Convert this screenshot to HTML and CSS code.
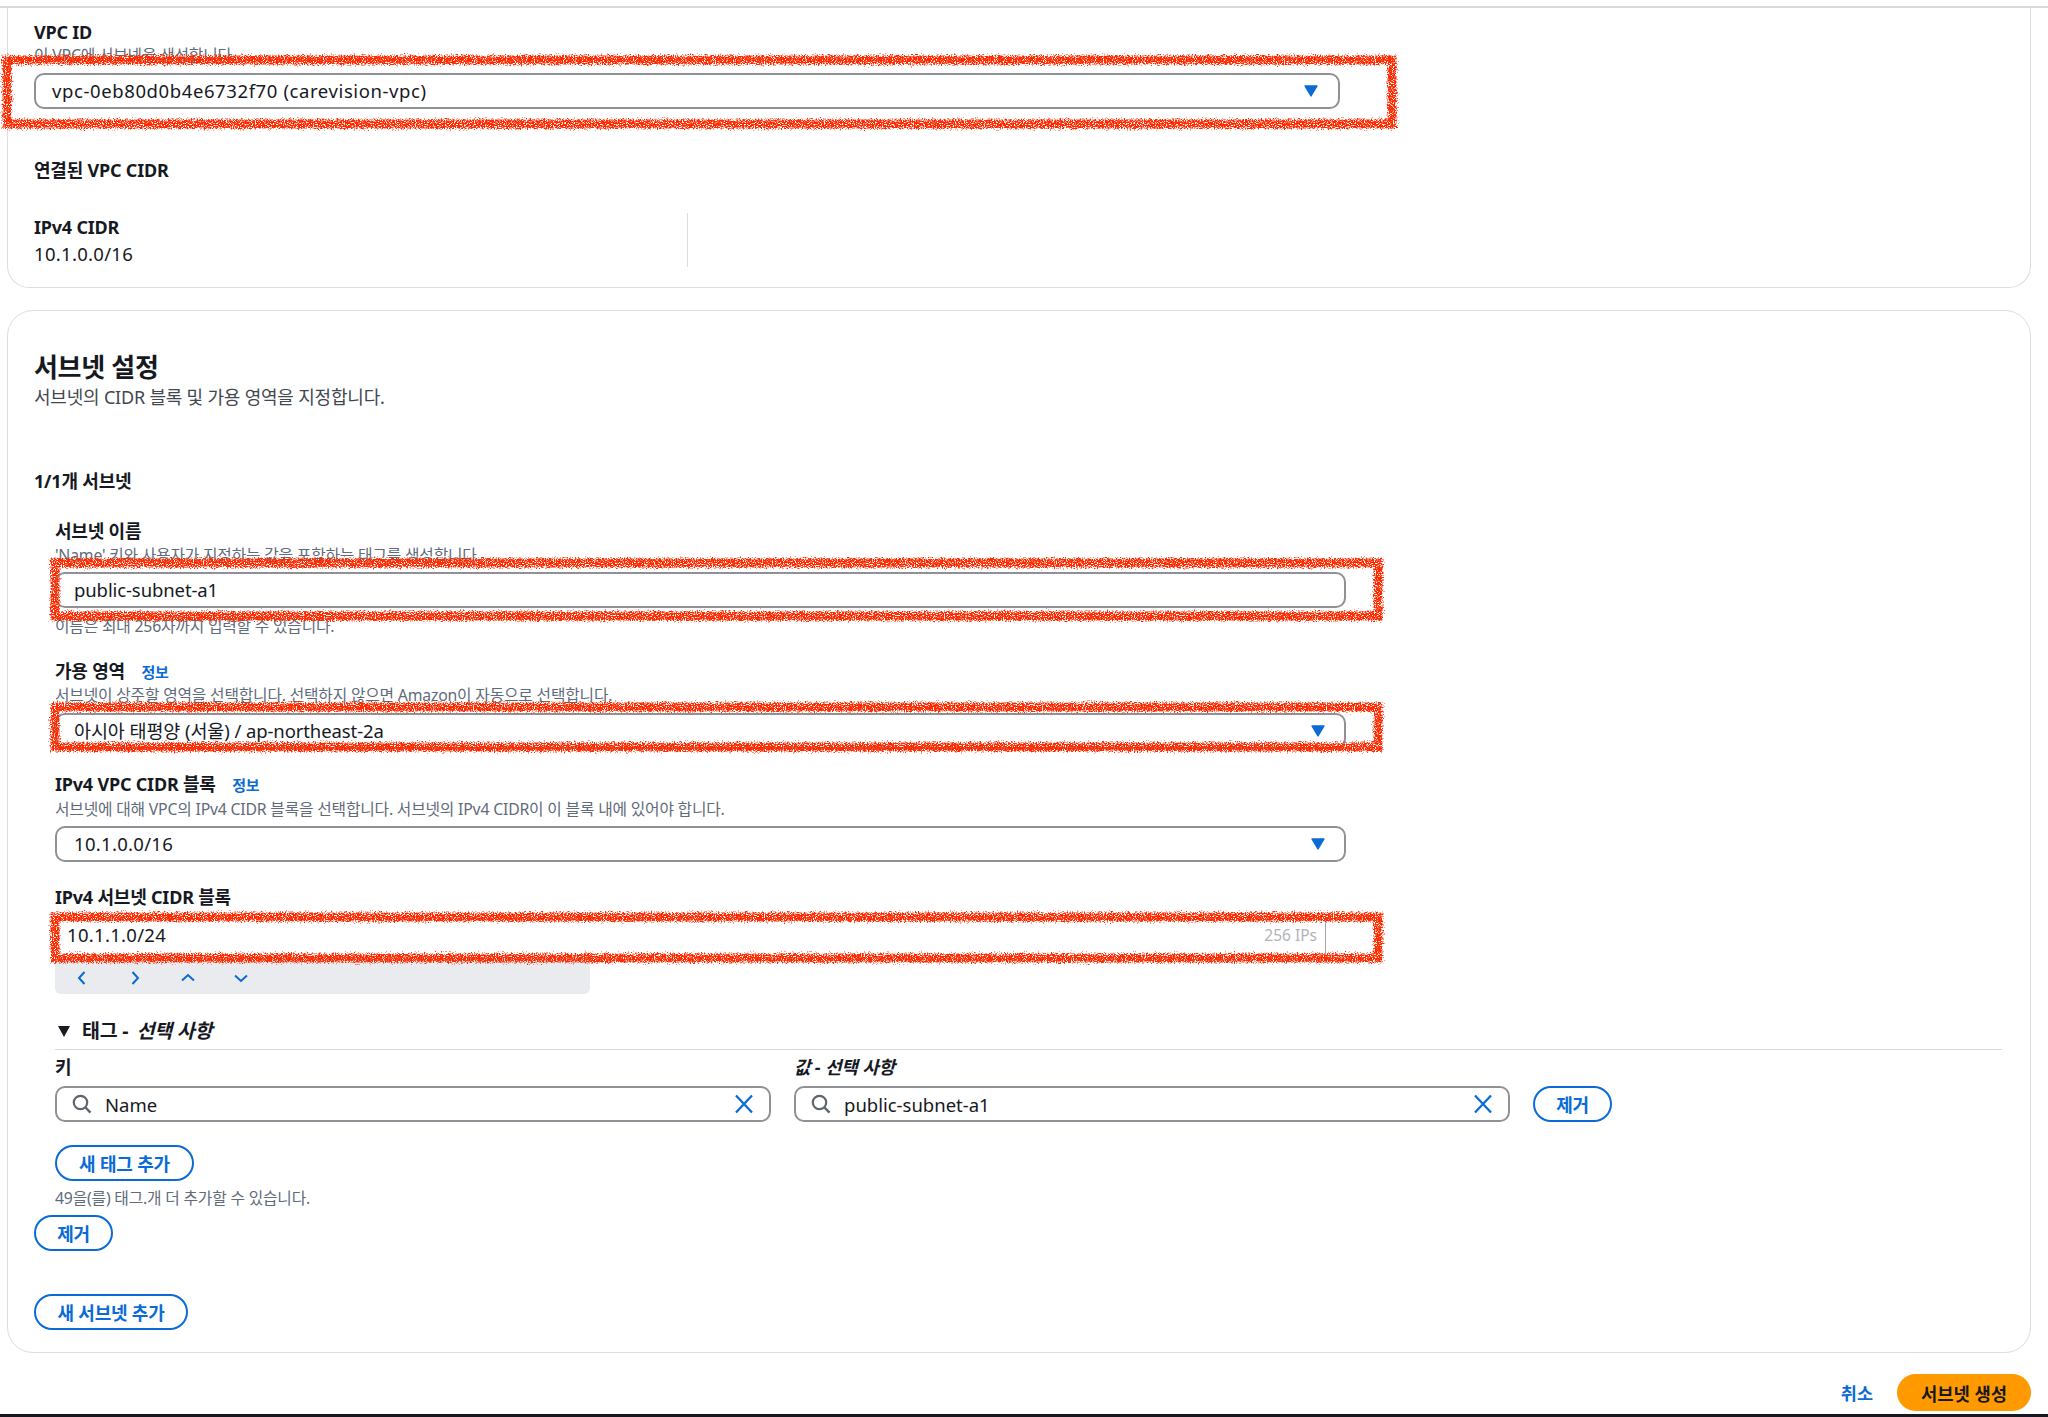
FILE: index.html
```html
<!DOCTYPE html>
<html lang="ko">
<head>
<meta charset="utf-8">
<title>서브넷 생성</title>
<link rel="stylesheet" href="styles.css">
</head>
<body>
<svg class="defs" width="0" height="0" aria-hidden="true">
  <symbol id="i-caret" viewBox="0 0 14 12"><path d="M1 1h12L7 11z" fill="#0a6bd6" stroke="#0a6bd6" stroke-width="1.4" stroke-linejoin="round"/></symbol>
  <symbol id="i-search" viewBox="0 0 20 20"><circle cx="8.5" cy="8.5" r="6.7" fill="none" stroke="#5f6570" stroke-width="2.2"/><path d="M13.5 13.5l5 5.2" fill="none" stroke="#5f6570" stroke-width="2.4"/></symbol>
  <symbol id="i-x" viewBox="0 0 20 20"><path d="M2 1.5l16 17M18 1.5l-16 17" fill="none" stroke="#0a6bd6" stroke-width="2.3"/></symbol>
</svg>
<div class="topline"></div>

<section class="card card-vpc">
  <div class="label">VPC ID</div>
  <div class="desc desc-a">이 VPC에 서브넷을 생성합니다.</div>
  <div class="select select-vpc">
    <span class="vpc-val">vpc-0eb80d0b4e6732f70 (carevision-vpc)</span>
    <svg class="caret"><use href="#i-caret"/></svg>
  </div>
  <div class="label cidr-title">연결된 VPC CIDR</div>
  <div class="cidr-col">
    <div class="label">IPv4 CIDR</div>
    <div class="value num">10.1.0.0/16</div>
  </div>
</section>

<section class="card card-subnet">
  <h2 class="heading">서브넷 설정</h2>
  <p class="subheading">서브넷의 CIDR 블록 및 가용 영역을 지정합니다.</p>
  <div class="label count">1/1개 서브넷</div>

  <div class="subnet">
    <div class="label field-first">서브넷 이름</div>
    <div class="desc desc-b">'Name' 키와 사용자가 지정하는 값을 포함하는 태그를 생성합니다.</div>
    <div class="select select-c"><span>public-subnet-a1</span></div>
    <div class="desc hint">이름은 최대 256자까지 입력할 수 있습니다.</div>

    <div class="label field-next">가용 영역 <a class="info">정보</a></div>
    <div class="desc desc-a">서브넷이 상주할 영역을 선택합니다. 선택하지 않으면 Amazon이 자동으로 선택합니다.</div>
    <div class="select select-a"><span>아시아 태평양 (서울) / ap-northeast-2a</span><svg class="caret"><use href="#i-caret"/></svg></div>

    <div class="label field-next">IPv4 VPC CIDR 블록 <a class="info">정보</a></div>
    <div class="desc desc-b">서브넷에 대해 VPC의 IPv4 CIDR 블록을 선택합니다. 서브넷의 IPv4 CIDR이 이 블록 내에 있어야 합니다.</div>
    <div class="select select-c"><span class="num">10.1.0.0/16</span><svg class="caret"><use href="#i-caret"/></svg></div>

    <div class="label field-next">IPv4 서브넷 CIDR 블록</div>
    <div class="cidr-input">
      <span class="num">10.1.1.0/24</span>
      <span class="ips">256 IPs</span>
    </div>
    <div class="cidr-tools">
      <svg class="chev" viewBox="0 0 16 16"><path d="M10.5 2L5 8l5.5 6"/></svg>
      <svg class="chev" viewBox="0 0 16 16"><path d="M5.5 2L11 8l-5.5 6"/></svg>
      <svg class="chev" viewBox="0 0 16 16"><path d="M2 10.5L8 5l6 5.5"/></svg>
      <svg class="chev" viewBox="0 0 16 16"><path d="M2 5.5L8 11l6-5.5"/></svg>
    </div>

    <div class="tags-head"><span class="tri"></span>태그 - <em>선택 사항</em></div>
    <div class="tag-grid">
      <div class="label">키</div>
      <div class="label"><em>값 - 선택 사항</em></div>
      <div></div>
      <div class="search"><svg class="s-icon"><use href="#i-search"/></svg><span class="s-text">Name</span><svg class="x-icon"><use href="#i-x"/></svg></div>
      <div class="search"><svg class="s-icon"><use href="#i-search"/></svg><span class="s-text">public-subnet-a1</span><svg class="x-icon"><use href="#i-x"/></svg></div>
      <button class="btn btn-remove-tag">제거</button>
    </div>
    <button class="btn btn-add-tag">새 태그 추가</button>
    <div class="desc tag-hint">49을(를) 태그.개 더 추가할 수 있습니다.</div>
  </div>

  <button class="btn btn-remove">제거</button>
  <button class="btn btn-add-subnet">새 서브넷 추가</button>
</section>

<footer class="actions">
  <a class="cancel">취소</a>
  <button class="btn-primary">서브넷 생성</button>
</footer>
<div class="bottombar"></div>

<svg class="marks" viewBox="0 0 2048 1417" aria-hidden="true">
  <defs>
    <filter id="rough" x="-5%" y="-20%" width="110%" height="140%">
      <feTurbulence type="fractalNoise" baseFrequency="0.7" numOctaves="2" seed="4" result="n"/>
      <feDisplacementMap in="SourceGraphic" in2="n" scale="8" xChannelSelector="R" yChannelSelector="G" result="d"/>
      <feTurbulence type="fractalNoise" baseFrequency="0.9" numOctaves="1" seed="11"/>
      <feColorMatrix type="matrix" values="0 0 0 0 0  0 0 0 0 0  0 0 0 0 0  6 0 0 0 -1.9" result="speck"/>
      <feComposite in="d" in2="speck" operator="in"/>
    </filter>
  </defs>
  <g filter="url(#rough)" fill="none" stroke="#ff2a00" stroke-width="9">
    <rect x="7" y="60" width="1385" height="64"/>
    <rect x="55" y="563" width="1323" height="53"/>
    <rect x="55" y="707" width="1323" height="40"/>
    <rect x="55" y="917" width="1323" height="41"/>
  </g>
</svg>
</body>
</html>
```
FILE: styles.css
```css
* { box-sizing: border-box; }
html, body { margin: 0; padding: 0; }
body {
  position: relative;
  height: 1417px;
  overflow: hidden;
  background: #fff;
  color: #16191f;
  font-family: "Noto Sans", "Noto Sans CJK KR", sans-serif;
  font-size: 18.5px;
  display: flex;
  flex-direction: column;
}
.defs { position: absolute; }
.topline { margin-top: 6px; height: 2px; background: #d8d9dc; flex: none; }
.card {
  flex: none;
  margin: 0 17px 0 7px;
  border: 1.5px solid #dcdde0;
  background: #fff;
}
.card-vpc {
  height: 280px;
  border-top: 0;
  border-radius: 0 0 22px 22px;
  padding: 12px 0 0 26px;
}
.card-subnet {
  margin-top: 22px;
  height: 1043px;
  border-radius: 26px;
  padding: 40px 0 0 26px;
}
.label {
  font-family: "Noto Sans", "Noto Sans CJK KR", sans-serif;
  font-weight: 700;
  font-size: 18px;
  line-height: 24px;
  letter-spacing: -0.2px;
}
.desc {
  font-size: 15.8px;
  line-height: 20px;
  color: #5f6b7a;
  letter-spacing: -0.2px;
}
.desc-a { margin-top: 1px; }
.desc-b { margin-top: 2px; }
.select {
  display: flex;
  align-items: center;
  justify-content: space-between;
  height: 36px;
  border: 2.5px solid #909196;
  border-radius: 10px;
  font-size: 18.5px;
  line-height: 24px;
  letter-spacing: -0.1px;
  background: #fff;
}
.select-vpc { margin-top: 8px; width: 1306px; padding: 0 20px 0 16px; }
.select-a { margin-top: 8px; padding: 0 19px 0 17px; }
.select-c { margin-top: 7px; padding: 0 19px 0 17px; }
.vpc-val { letter-spacing: 0.6px; }
.num { letter-spacing: 0.3px; }
.caret { width: 14px; height: 12px; flex: none; }
.cidr-title { margin-top: 49px; }
.cidr-col {
  margin-top: 31px;
  width: 654px;
  height: 54px;
  padding-top: 2px;
  border-right: 1px solid #dcdde0;
}
.value { margin-top: 3px; font-size: 18.5px; line-height: 24px; }
.heading {
  margin: 0;
  font-size: 26px;
  line-height: 32px;
  font-weight: 700;
  letter-spacing: -0.3px;
}
.subheading {
  margin: 2px 0 0;
  font-size: 18px;
  line-height: 24px;
  color: #414750;
  letter-spacing: -0.2px;
}
.count { margin-top: 60px; }
.subnet { margin: 26px 0 0 21px; width: 1291px; }
.hint { margin-top: 8px; }
.field-next { margin-top: 23px; }
.info {
  margin-left: 12px;
  color: #0a6bd6;
  font-size: 15px;
  font-weight: 700;
}
.cidr-input {
  margin-top: 6px;
  width: 1271px;
  height: 41px;
  display: flex;
  align-items: center;
  justify-content: space-between;
  padding: 0 8px 2px 12px;
  border-right: 1.5px solid #a4a6ab;
  font-size: 18.5px;
}
.ips { color: #b2b4b8; font-size: 15.5px; }
.cidr-tools {
  width: 535px;
  height: 38px;
  background: #e9ebef;
  border-radius: 0 0 6px 6px;
  display: flex;
  gap: 37px;
  align-items: center;
  padding: 6px 0 0 19px;
}
.chev {
  width: 16px;
  height: 16px;
  fill: none;
  stroke: #0a6bd6;
  stroke-width: 2;
}
.tags-head {
  margin-top: 25px;
  width: 1947px;
  height: 31px;
  line-height: 24px;
  border-bottom: 1.5px solid #d8d9dc;
  font-size: 19.5px;
  font-weight: 700;
  display: flex;
  gap: 8px;
  letter-spacing: -0.2px;
}
.tags-head em { font-style: italic; }
.tri {
  margin: 7px 4px 0 3px;
  width: 0;
  height: 0;
  border-left: 6px solid transparent;
  border-right: 6px solid transparent;
  border-top: 11px solid #16191f;
}
.tag-grid {
  margin-top: 5px;
  width: 1557px;
  display: grid;
  grid-template-columns: 716px 716px 79px;
  column-gap: 23px;
  row-gap: 7px;
}
.search {
  height: 36px;
  border: 2.5px solid #909196;
  border-radius: 10px;
  display: flex;
  align-items: center;
  padding: 0 15px 0 15px;
}
.s-icon { width: 20px; height: 20px; flex: none; }
.s-text { flex: 1; margin-left: 13px; font-size: 18.5px; letter-spacing: 0; }
.x-icon { width: 20px; height: 20px; flex: none; }
.btn {
  display: block;
  height: 36px;
  padding: 0;
  background: #fff;
  border: 2.5px solid #0a6bd6;
  border-radius: 18px;
  color: #0a6bd6;
  font-family: "Noto Sans", "Noto Sans CJK KR", sans-serif;
  font-size: 18px;
  font-weight: 700;
  letter-spacing: -0.2px;
}
.btn-remove-tag { width: 79px; }
.btn-add-tag { margin-top: 23px; width: 139px; }
.tag-hint { margin-top: 7px; }
.btn-remove { margin-top: 7px; width: 79px; }
.btn-add-subnet { margin-top: 43px; width: 154px; }
.actions {
  flex: none;
  margin: 21px 17px 0 0;
  display: flex;
  justify-content: flex-end;
  align-items: center;
  gap: 24px;
}
.cancel { color: #0a6bd6; font-size: 17.5px; font-weight: 700; }
.btn-primary {
  width: 134px;
  height: 37px;
  padding: 0;
  border: 0;
  border-radius: 19px;
  background: #ff9900;
  color: #16191f;
  font-family: "Noto Sans", "Noto Sans CJK KR", sans-serif;
  font-size: 17.7px;
  font-weight: 700;
}
.bottombar { position: absolute; left: 0; right: 0; bottom: 0; height: 3px; background: #161a20; }
.marks { position: absolute; left: 0; top: 0; width: 2048px; height: 1417px; pointer-events: none; }
```
